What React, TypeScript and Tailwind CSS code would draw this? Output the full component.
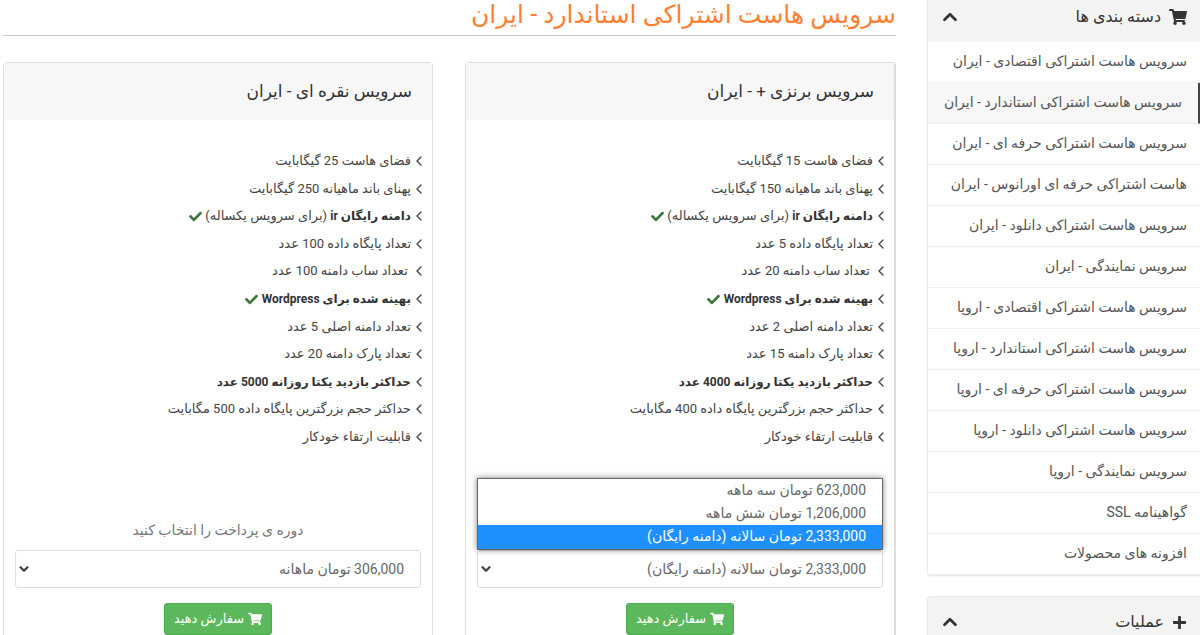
import { FaCheck, FaPlus, FaShoppingCart } from 'react-icons/fa'
import { ChevronDown, ChevronLeft, ChevronUp } from 'lucide-react'
import type { ReactNode } from 'react'

interface Plan {
  id: string
  title: string
  space: string
  traffic: string
  databases: string
  subdomains: string
  domains: string
  parked: string
  visits: string
  dbSize: string
  options: string[]
  selected: string
  open?: boolean
}

const categories = [
  'سرویس هاست اشتراکی اقتصادی - ایران',
  'سرویس هاست اشتراکی استاندارد - ایران',
  'سرویس هاست اشتراکی حرفه ای - ایران',
  'هاست اشتراکی حرفه ای اورانوس - ایران',
  'سرویس هاست اشتراکی دانلود - ایران',
  'سرویس نمایندگی - ایران',
  'سرویس هاست اشتراکی اقتصادی - اروپا',
  'سرویس هاست اشتراکی استاندارد - اروپا',
  'سرویس هاست اشتراکی حرفه ای - اروپا',
  'سرویس هاست اشتراکی دانلود - اروپا',
  'سرویس نمایندگی - اروپا',
  'گواهینامه SSL',
  'افزونه های محصولات',
]

const activeCategory = 1

const plans: Plan[] = [
  {
    id: 'bronze',
    title: 'سرویس برنزی + - ایران',
    space: '15',
    traffic: '150',
    databases: '5',
    subdomains: '20',
    domains: '2',
    parked: '15',
    visits: '4000',
    dbSize: '400',
    options: ['623,000 تومان سه ماهه', '1,206,000 تومان شش ماهه', '2,333,000 تومان سالانه (دامنه رایگان)'],
    selected: '2,333,000 تومان سالانه (دامنه رایگان)',
    open: true,
  },
  {
    id: 'silver',
    title: 'سرویس نقره ای - ایران',
    space: '25',
    traffic: '250',
    databases: '100',
    subdomains: '100',
    domains: '5',
    parked: '20',
    visits: '5000',
    dbSize: '500',
    options: ['306,000 تومان ماهانه'],
    selected: '306,000 تومان ماهانه',
  },
]

function Feature({ children }: { children: ReactNode }) {
  return (
    <li className="flex items-center whitespace-nowrap">
      <ChevronLeft className="size-4 shrink-0" strokeWidth={2} />
      <span>{children}</span>
    </li>
  )
}

function Strong({ children }: { children: ReactNode }) {
  return <b className="text-xs text-[#333]">{children}</b>
}

function Check() {
  return <FaCheck className="inline size-[13px] text-[#3c763d]" />
}

function PlanCard({ plan }: { plan: Plan }) {
  return (
    <section
      className={
        plan.open
          ? 'flex-1 min-w-0 border border-r-2 border-[#ddd] rounded-t'
          : 'flex-1 min-w-0 border border-[#ddd] rounded-t'
      }
    >
      <h2 className="bg-[#f7f7f7] px-5 h-[57px] leading-[57px] text-[17px] text-[#333]">{plan.title}</h2>
      <div className="px-[11px] pt-[29px]">
        <ul className="flex flex-col justify-between min-h-[300px] leading-6 text-[13px] text-[#444] -mr-1.5">
          <Feature>فضای هاست {plan.space} گیگابایت</Feature>
          <Feature>پهنای باند ماهیانه {plan.traffic} گیگابایت</Feature>
          <Feature>
            <Strong>دامنه رایگان ir</Strong> (برای سرویس یکساله) <Check />
          </Feature>
          <Feature>تعداد پایگاه داده {plan.databases} عدد</Feature>
          <Feature>&nbsp;تعداد ساب دامنه {plan.subdomains} عدد</Feature>
          <Feature>
            <Strong>بهینه شده برای Wordpress</Strong> <Check />
          </Feature>
          <Feature>تعداد دامنه اصلی {plan.domains} عدد</Feature>
          <Feature>تعداد پارک دامنه {plan.parked} عدد</Feature>
          <Feature>
            <Strong>حداکثر بازدید یکتا روزانه {plan.visits} عدد</Strong>
          </Feature>
          <Feature>حداکثر حجم بزرگترین پایگاه داده {plan.dbSize} مگابایت</Feature>
          <Feature>قابلیت ارتقاء خودکار</Feature>
        </ul>
        <label
          htmlFor={plan.id}
          className={
            plan.open
              ? 'invisible block mt-[69px] mb-2 text-center leading-6 text-sm'
              : 'block mt-[69px] mb-2 text-center leading-6 text-sm text-[#777]'
          }
        >
          دوره ی پرداخت را انتخاب کنید
        </label>
        <div className="relative">
          <select
            id={plan.id}
            defaultValue={plan.selected}
            className="block appearance-none w-full h-[38px] px-4 border border-[#ddd] rounded-[3px] bg-white text-sm text-[#666]"
          >
            {plan.options.map((option) => (
              <option key={option}>{option}</option>
            ))}
          </select>
          <ChevronDown className="absolute left-0.5 top-3 size-3.5 text-[#444] pointer-events-none" strokeWidth={4} />
          {plan.open && (
            <ul className="absolute inset-x-0 bottom-full border border-[#666] bg-white text-sm text-[#666] shadow-[0_0_6px_rgba(0,0,0,0.5)]">
              {plan.options.map((option) => (
                <li
                  key={option}
                  className={
                    option === plan.selected
                      ? 'px-4 h-6 leading-[22px] bg-[#1e90ff] text-white'
                      : 'px-4 h-[23px] leading-[22px]'
                  }
                >
                  {option}
                </li>
              ))}
            </ul>
          )}
        </div>
        <button className="flex items-center gap-1 mx-auto mt-[15px] h-8 px-[9px] rounded-[3px] border border-[#4cae4c] bg-[#5cb85c] text-white text-[13px]">
          <FaShoppingCart className="size-3.5" />
          سفارش دهید
        </button>
      </div>
    </section>
  )
}

function PanelHeader({ icon, title }: { icon: ReactNode; title: string }) {
  return (
    <div className="flex items-center gap-2 h-[42px] pb-2 pr-[13px] pl-[11px] bg-[#f3f3f3] text-base text-[#333]">
      {icon}
      <span className="flex-1">{title}</span>
      <button aria-label={title}>
        <ChevronUp className="size-[22px]" strokeWidth={3} />
      </button>
    </div>
  )
}

export default function App() {
  return (
    <div
      dir="rtl"
      className="flex gap-[31px] min-h-screen bg-white pl-[3px] overflow-hidden font-['Roboto','DejaVu_Sans',sans-serif]"
    >
      <aside className="w-[273px] shrink-0">
        <nav className="border-l border-b border-[#e8e8e8] rounded-bl shadow-xs">
          <PanelHeader icon={<FaShoppingCart className="size-[18px]" />} title="دسته بندی ها" />
          <ul className="text-sm text-[#555]">
            {categories.map((category, i) => (
              <li key={category}>
                <a
                  href="#"
                  className={
                    i === activeCategory
                      ? 'block h-[41px] leading-[38px] pr-4 border-b border-[#eee] border-r-2 border-r-[#444] bg-[#f7f7f7] whitespace-nowrap'
                      : 'block h-[41px] leading-[38px] pr-[13px] border-b border-[#eee] whitespace-nowrap'
                  }
                >
                  {category}
                </a>
              </li>
            ))}
          </ul>
        </nav>
        <div className="mt-5 pt-2 rounded-tl border-l border-t border-[#e8e8e8] bg-[#f3f3f3]">
          <PanelHeader icon={<FaPlus className="size-[15px]" />} title="عملیات" />
        </div>
      </aside>
      <main className="flex-1 min-w-0">
        <h1 className="h-9 leading-[30px] border-b border-[#ccc] text-[25px] text-[#ff7f32]">
          سرویس هاست اشتراکی استاندارد - ایران
        </h1>
        <div className="flex gap-8 mt-[26px]">
          {plans.map((plan) => (
            <PlanCard key={plan.id} plan={plan} />
          ))}
        </div>
      </main>
    </div>
  )
}
